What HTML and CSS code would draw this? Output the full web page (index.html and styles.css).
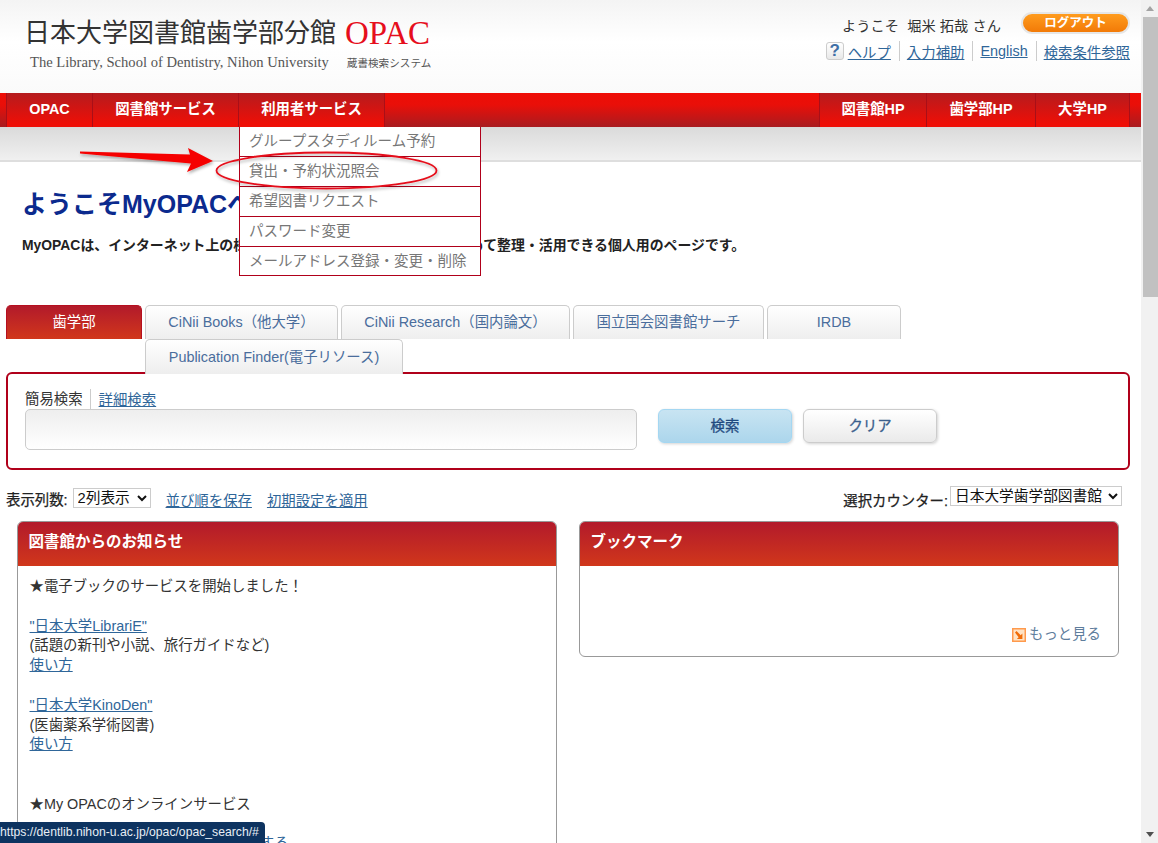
FILE: index.html
```html
<!DOCTYPE html>
<html lang="ja">
<head>
<meta charset="utf-8">
<title>日本大学図書館歯学部分館 OPAC</title>
<link rel="stylesheet" href="styles.css">
</head>
<body>
<div class="window">
  <div class="page">
    <header class="masthead">
      <div class="brand">
        <div class="brand-title"><span>日本大学図書館歯学部分館</span> <span class="brand-opac">OPAC</span></div>
        <div class="brand-sub"><span class="brand-en">The Library, School of Dentistry, Nihon University</span><span class="brand-jp">蔵書検索システム</span></div>
      </div>
      <div class="account">
        <div class="account-top">
          <span class="welcome">ようこそ&nbsp; 堀米 拓哉 さん</span>
          <a class="logout" href="#">ログアウト</a>
        </div>
        <div class="account-links">
          <span class="help-icon">?</span>
          <a href="#">ヘルプ</a><i class="vsep"></i><a href="#">入力補助</a><i class="vsep"></i><a href="#">English</a><i class="vsep"></i><a href="#">検索条件参照</a>
        </div>
      </div>
    </header>

    <nav class="nav">
      <div class="nav-group">
        <a class="nav-item nav-opac" href="#">OPAC</a>
        <a class="nav-item nav-wide" href="#">図書館サービス</a>
        <div class="nav-holder">
          <a class="nav-item nav-wide" href="#">利用者サービス</a>
          <ul class="menu">
            <li>グループスタディルーム予約</li>
            <li>貸出・予約状況照会</li>
            <li>希望図書リクエスト</li>
            <li>パスワード変更</li>
            <li>メールアドレス登録・変更・削除</li>
          </ul>
        </div>
      </div>
      <div class="nav-group">
        <a class="nav-item nav-r1" href="#">図書館HP</a>
        <a class="nav-item nav-r2" href="#">歯学部HP</a>
        <a class="nav-item nav-r3" href="#">大学HP</a>
      </div>
    </nav>
    <div class="subbar"></div>

    <section class="intro">
      <h1>ようこそMyOPACへ</h1>
      <p>MyOPACは、インターネット上の様々な情報や文献情報を収集し、まとめて整理・活用できる個人用のページです。</p>
    </section>

    <div class="tabs">
      <div class="tab-row">
        <a class="tab tab-active t0" href="#">歯学部</a>
        <a class="tab t1" href="#">CiNii Books（他大学）</a>
        <a class="tab t2" href="#">CiNii Research（国内論文）</a>
        <a class="tab t3" href="#">国立国会図書館サーチ</a>
        <a class="tab t4" href="#">IRDB</a>
      </div>
      <div class="tab-row tab-row-2">
        <a class="tab t5" href="#">Publication Finder(電子リソース)</a>
      </div>
    </div>

    <section class="search">
      <div class="search-modes"><span class="mode-current">簡易検索</span><a href="#">詳細検索</a></div>
      <div class="search-line">
        <input class="search-input" type="text" aria-label="検索語">
        <button class="btn btn-go" type="button">検索</button>
        <button class="btn btn-clear" type="button">クリア</button>
      </div>
    </section>

    <div class="options">
      <div class="options-left">
        <label>表示列数:</label>
        <select class="sel-cols"><option>2列表示</option></select>
        <a href="#">並び順を保存</a>
        <a href="#">初期設定を適用</a>
      </div>
      <div class="options-right">
        <label>選択カウンター:</label>
        <select class="sel-counter"><option>日本大学歯学部図書館</option></select>
      </div>
    </div>

    <div class="columns">
      <article class="panel panel-news">
        <h2>図書館からのお知らせ</h2>
        <div class="panel-body">
          <p>★電子ブックのサービスを開始しました！</p>
          <p><a href="#">"日本大学LibrariE"</a><br>(話題の新刊や小説、旅行ガイドなど)<br><a href="#">使い方</a></p>
          <p><a href="#">"日本大学KinoDen"</a><br>(医歯薬系学術図書)<br><a href="#">使い方</a></p>
          <p class="gap">★My OPACのオンラインサービス</p>
          <p class="after"><a href="#">貸出中の資料の予約・貸出期間延長する</a></p>
        </div>
      </article>
      <article class="panel panel-mark">
        <h2>ブックマーク</h2>
        <div class="panel-body mark-body">
          <a class="more" href="#">
            <svg class="more-icon" width="14" height="14" viewBox="0 0 14 14"><rect x=".75" y=".75" width="12.500" height="12.500" fill="#ffe3c4" stroke="#ff9a4d" stroke-width="1.500"/><path d="M3 4.500 4.500 3 8.700 7.200 10.400 5.500V11H4.900L6.600 9.300Z" fill="#f06c08"/></svg>
            もっと見る</a>
        </div>
      </article>
    </div>
  </div>

  <div class="scrollbar">
    <span class="sb-up"></span>
    <span class="sb-thumb"></span>
    <span class="sb-down"></span>
  </div>

  <svg class="annot" width="460" height="60" viewBox="0 0 460 60">
    <defs>
      <filter id="soft" x="-10%" y="-30%" width="120%" height="170%"><feDropShadow dx="1" dy="2" stdDeviation="1.500" flood-color="#000" flood-opacity=".3"/></filter>
    </defs>
    <path d="M80 9.500 190 12.500 188 6 213 19 187 30 191 21.500 80 11.500Z" fill="#f50505" filter="url(#soft)"/>
    <ellipse cx="326.500" cy="28.500" rx="110" ry="18" fill="none" stroke="#e5101a" stroke-width="1.800" filter="url(#soft)"/>
  </svg>

  <div class="status">https://dentlib.nihon-u.ac.jp/opac/opac_search/#</div>
</div>
</body>
</html>
```
FILE: styles.css
```css
* { box-sizing: border-box; }
html, body { margin: 0; height: 100%; overflow: hidden; }
body {
  font-family: "Liberation Sans", "Noto Sans CJK JP", sans-serif;
  font-size: 14.400px;
  color: #333;
  background: #fff;
}
a { color: #2f6699; }
.window { position: relative; display: flex; width: 1158px; height: 843px; overflow: hidden; }
.page { width: 1141px; flex: none; }

/* masthead */
.masthead {
  height: 93px;
  display: flex;
  justify-content: space-between;
  background: linear-gradient(#f4f4f4 0, #fff 45%, #fafafa 100%);
}
.brand { padding: 16px 0 0 24px; }
.brand-title { display: flex; align-items: center; gap: 9px; font-size: 26px; line-height: 34px; color: #333; white-space: nowrap; }
.brand-opac { font-family: "Liberation Serif", serif; font-size: 33px; color: #e60e1c; }
.brand-sub { display: flex; align-items: center; margin: 4px 0 0 6px; color: #555; height: 16px; white-space: nowrap; }
.brand-en { font-family: "Liberation Serif", serif; font-size: 14.600px; }
.brand-jp { font-size: 10.600px; margin-left: 18px; }
.account { width: 320px; padding: 12px 11px 0 0; }
.account-top { display: flex; justify-content: flex-end; align-items: center; height: 22px; }
.welcome { font-size: 14.200px; margin-right: 20px; padding-top: 4px; letter-spacing: .1px; }
.logout {
  width: 109px; height: 22px; border-radius: 11px; border: 2px solid #e6e6e6;
  background: linear-gradient(#ff9c1e, #f27a07);
  color: #fff; font-size: 12.500px; font-weight: bold; text-align: center; line-height: 18px; text-decoration: none;
}
.account-links { display: flex; justify-content: flex-end; align-items: center; height: 20px; margin-top: 7px; font-size: 14.400px; white-space: nowrap; }
.help-icon {
  width: 18px; height: 18px; margin-right: 4px; border: 1px solid #ccc; border-radius: 3px;
  background: linear-gradient(#fff, #e8e8e8);
  color: #3f6fa6; font-weight: bold; font-size: 17px; line-height: 16px; text-align: center;
}
.vsep { width: 1px; height: 20px; background: #ccc; margin: 0 7px 0 8px; }

/* nav */
.nav {
  height: 34px; padding: 0 11px 0 6px;
  display: flex; justify-content: space-between;
  background: linear-gradient(#ee0d06 0, #e90f09 35%, #a81c20 100%);
}
.nav-group { display: flex; }
.nav-holder { position: relative; }
.nav-item {
  display: block; height: 34px; line-height: 32px; text-align: center;
  color: #fff; font-weight: bold; font-size: 14.400px; text-decoration: none;
  background: linear-gradient(#b51b1e, #ee0f07 90%);
  border-left: 1px solid #a90f18; border-right: 1px solid #a90f18;
  margin-right: -1px;
}
.nav-opac { width: 87px; }
.nav-wide { width: 147px; }
.nav-r1 { width: 108px; }
.nav-r2 { width: 110px; }
.nav-r3 { width: 95px; margin-right: 0; }
.menu {
  position: absolute; left: 1px; top: 34px; z-index: 5; width: 242px; margin: 0; padding: 0; list-style: none;
  background: #fff; border: 1px solid #b0001a; border-top: 0;
}
.menu li {
  height: 30px; line-height: 28px; padding-left: 9px; font-size: 14.500px; color: #777; white-space: nowrap;
  border-bottom: 1px solid #b0001a;
}
.menu li:last-child { border-bottom: 0; height: 28px; }
.subbar { height: 35px; background: linear-gradient(#dadada, #f0f0f0); border-bottom: 2px solid #dedede; }

/* intro */
.intro { padding: 24px 0 0 22px; height: 143px; }
.intro h1 { margin: 0; font-size: 25px; line-height: 36px; color: #0b2a8e; white-space: nowrap; }
.intro p { margin: 13px 0 0; font-weight: bold; font-size: 13.900px; line-height: 20px; color: #222; white-space: nowrap; }

/* tabs */
.tabs { padding-left: 6px; position: relative; z-index: 2; }
.tab-row { display: flex; gap: 3px; height: 34px; }
.tab-row-2 { padding-left: 139px; height: 35px; }
.tab {
  display: block; height: 100%; text-align: center; line-height: 33px; text-decoration: none;
  font-size: 14.400px; color: #4a6d9c; white-space: nowrap;
  border: 1px solid #ccc; border-bottom: 0; border-radius: 5px 5px 0 0;
  background: linear-gradient(#fff, #eee);
}
.tab-row-2 .tab { line-height: 35px; }
.tab-active { background: linear-gradient(#b21a2b, #d1371b); color: #fff; border-color: #b50f1f; }
.t0 { width: 136px; }
.t1 { width: 193px; }
.t2 { width: 229px; }
.t3 { width: 191px; }
.t4 { width: 134px; }
.t5 { width: 258px; }

/* search */
.search {
  position: relative; z-index: 1;
  width: 1124px; height: 98px; margin: -2px 0 0 6px; padding: 15px 17px 0;
  border: 2px solid #b0001a; border-radius: 6px; background: #fff;
}
.search-modes { display: flex; align-items: center; height: 20px; font-size: 14.400px; }
.mode-current { padding-right: 7px; border-right: 1px solid #ccc; line-height: 20px; color: #333; }
.search-modes a { margin: -2px 0 0 8px; }
.search-line { display: flex; align-items: flex-start; }
.search-input {
  width: 612px; height: 41px; padding: 0; margin-right: 21px;
  border: 1px solid #ccc; border-radius: 5px; background: linear-gradient(#eee, #fff);
}
.btn {
  width: 134px; height: 34px; margin-right: 11px; border-radius: 6px; padding: 0 0 3px;
  font-family: inherit; font-size: 14.400px; color: #2f5277;
  box-shadow: 1px 1px 3px rgba(0,0,0,.18);
  -webkit-text-stroke: .3px currentColor;
}
.btn-go { background: linear-gradient(#c8e4f2, #acd6ec); border: 1px solid #a4d7f2; color: #1f4a80; }
.btn-clear { background: linear-gradient(#fff, #eaeaea); border: 1px solid #ccc; color: #3b5f8d; }

/* options */
.options {
  display: flex; justify-content: space-between; align-items: flex-start;
  height: 51px; padding: 16px 19px 0 6px;
}
.options label { color: #222; font-size: 14.400px; -webkit-text-stroke: .25px #222; }
.options-left { display: flex; align-items: center; height: 20px; padding-top: 4px; }
.options-left a { margin-left: 15px; font-size: 14.400px; padding-top: 2px; }
.options-right { display: flex; align-items: center; height: 20px; }
.options-right label { padding-top: 7px; }
.options select {
  height: 20px; padding: 0; background: #fff; border: 1px solid #ccc; border-radius: 0;
  font-family: inherit; font-size: 14.700px; color: #111;
}
.sel-cols { width: 78px; margin-left: 5px; }
.sel-counter { width: 172px; margin-left: 2px; }

/* panels */
.columns { display: flex; gap: 22px; align-items: flex-start; padding-left: 17px; }
.panel { width: 540px; border: 1px solid #999; border-radius: 6px; overflow: hidden; background: #fff; }
.panel-news { height: 340px; }
.panel-mark { height: 136px; }
.panel h2 {
  margin: 0; height: 44px; padding-left: 10.500px; line-height: 39px;
  font-size: 15.500px; color: #fff;
  background: linear-gradient(#b21a2b, #d1371b);
}
.panel-body { padding: 11px 12px 0 11.500px; line-height: 19.800px; }
.panel-body p { margin: 0 0 19.800px; white-space: nowrap; }
.panel-body p.gap { margin: 39.600px 0 0; }
.panel-body p.after { margin: 19.800px 0 0; }
.mark-body { height: 90px; display: flex; justify-content: flex-end; align-items: flex-end; padding: 0 17px 11px 0; }
.more { display: flex; align-items: center; gap: 3px; color: #5e7d9c; text-decoration: none; }
.more-icon { flex: none; }

/* fake scrollbar */
.scrollbar { flex: none; width: 17px; height: 843px; background: #f1f1f1; display: flex; flex-direction: column; align-items: center; }
.sb-up, .sb-down { display: block; width: 0; height: 0; flex: none; border-left: 4.500px solid transparent; border-right: 4.500px solid transparent; }
.sb-up { margin: 6px 0 6px; border-bottom: 5px solid #a3a3a3; }
.sb-thumb { display: block; width: 15px; height: 280px; background: #c1c1c1; flex: none; margin-left: 1px; }
.sb-down { margin-top: auto; margin-bottom: 6px; border-top: 5px solid #505050; }

/* overlays */
.annot { position: absolute; left: 0; top: 142px; z-index: 8; pointer-events: none; }
.status {
  position: absolute; left: 0; bottom: 0; z-index: 9; width: 265px; height: 21px; line-height: 21px;
  background: #0d3360; color: #e8eef5; font-size: 12.200px; border-radius: 0 4px 0 0; white-space: nowrap; overflow: hidden;
}
```
